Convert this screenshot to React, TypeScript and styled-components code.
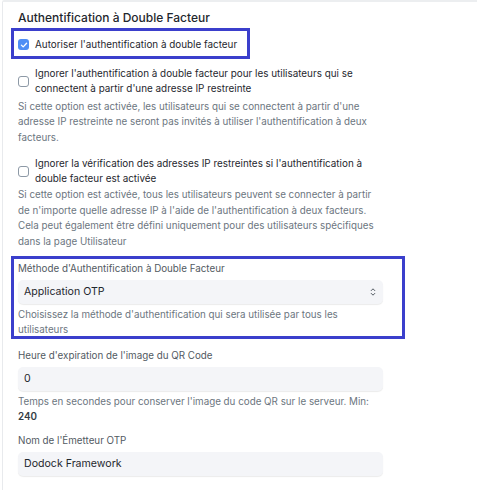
import React from "react";
import styled, { createGlobalStyle } from "styled-components";

const Global = createGlobalStyle`
  html, body { margin: 0; padding: 0; background: #ffffff; }
  body { font-family: Inter, "Noto Sans", sans-serif; color: #1f272e; -webkit-font-smoothing: antialiased; }
`;

const Page = styled.div`
  padding-left: 2px;
  height: 490px;
  overflow: hidden;
`;

const Panel = styled.div`
  border-left: 1px solid #e8eaed;
  border-top: 2px solid #eceef0;
  border-top-left-radius: 2px;
  padding: 8px 0 0 15px;
  min-height: 500px;
`;

const Title = styled.h3`
  margin: 0 0 11px 0;
  font-size: 12px;
  line-height: 16px;
  font-weight: 500;
  color: #1f272e;
`;

const Column = styled.div`
  width: 365px;
  display: flex;
  flex-direction: column;
`;

const Highlight = styled.div<{ $t: number; $l: number; $r: number; $b: number; $fit?: boolean }>`
  position: relative;
  ${(p) => (p.$fit ? "align-self: flex-start;" : "")}
  &::after {
    content: "";
    position: absolute;
    top: ${(p) => p.$t}px;
    left: ${(p) => p.$l}px;
    right: ${(p) => p.$r}px;
    bottom: ${(p) => p.$b}px;
    border: 3px solid #3b3fcc;
    pointer-events: none;
  }
`;

const CheckRow = styled.label`
  display: flex;
  align-items: center;
  gap: 6px;
  font-size: 9.9px;
  line-height: 15.5px;
  color: #1f272e;
`;

const Box = styled.span<{ $on?: boolean }>`
  flex: 0 0 auto;
  width: 11px;
  height: 11px;
  box-sizing: border-box;
  border-radius: 3px;
  border: ${(p) => (p.$on ? "none" : "1px solid #8d99a6")};
  background: ${(p) => (p.$on ? "#4f8ef5" : "#fff")};
  display: inline-flex;
  align-items: center;
  justify-content: center;
`;

const Help = styled.div<{ $mt: number }>`
  font-size: 9.8px;
  line-height: 15.5px;
  color: #6c7680;
  margin-top: ${(p) => p.$mt}px;
`;

const Label = styled.div`
  font-size: 9.8px;
  line-height: 15px;
  color: #525a62;
  margin-bottom: 3.5px;
`;

const Input = styled.div`
  height: 24px;
  box-sizing: border-box;
  border-radius: 5px;
  background: #f4f5f8;
  box-shadow: 0 1px 1px rgba(0, 0, 0, 0.08);
  padding: 0 6px;
  display: flex;
  align-items: center;
  justify-content: space-between;
  font-size: 10.6px;
  color: #1f272e;
`;

const Group = styled.div<{ $mt: number }>`
  margin-top: ${(p) => p.$mt}px;
`;

const Strong = styled.b`
  font-weight: 600;
  color: #333c44;
`;

const Check = () => (
  <svg width="8" height="8" viewBox="0 0 8 8">
    <path d="M1.4 4.1 L3.2 5.9 L6.6 2.2" fill="none" stroke="#fff" strokeWidth="1.3" strokeLinecap="round" strokeLinejoin="round" />
  </svg>
);

const Chevrons = () => (
  <svg width="8" height="12" viewBox="0 0 8 12">
    <path d="M2.2 4.6 L4 2.8 L5.8 4.6 M2.2 7.4 L4 9.2 L5.8 7.4" fill="none" stroke="#525a62" strokeWidth="1" strokeLinecap="round" strokeLinejoin="round" />
  </svg>
);

export default function App() {
  return (
    <>
      <Global />
      <Page>
        <Panel>
          <Title>Authentification à Double Facteur</Title>
          <Column>
            <Highlight $fit $t={-9} $l={-7} $r={-13} $b={-6}>
              <CheckRow>
                <Box $on>
                  <Check />
                </Box>
                Autoriser l'authentification à double facteur
              </CheckRow>
            </Highlight>
            <Group $mt={13}>
              <CheckRow>
                <Box />
                <span>
                  Ignorer l'authentification à double facteur pour les utilisateurs qui se connectent à partir d'une adresse IP restreinte
                </span>
              </CheckRow>
              <Help $mt={2}>
                Si cette option est activée, les utilisateurs qui se connectent à partir d'une adresse IP restreinte ne seront pas invités à utiliser l'authentification à deux facteurs.
              </Help>
            </Group>
            <Group $mt={10.5}>
              <CheckRow>
                <Box />
                <span>
                  Ignorer la vérification des adresses IP restreintes si l'authentification à double facteur est activée
                </span>
              </CheckRow>
              <Help $mt={0.5}>
                Si cette option est activée, tous les utilisateurs peuvent se connecter à partir de n'importe quelle adresse IP à l'aide de l'authentification à deux facteurs. Cela peut également être défini uniquement pour des utilisateurs spécifiques dans la page Utilisateur
              </Help>
            </Group>
            <Group $mt={12}>
              <Highlight $t={-5.5} $l={-7} $r={-22} $b={-1}>
                <Label>Méthode d'Authentification à Double Facteur</Label>
                <Input>
                  Application OTP
                  <Chevrons />
                </Input>
                <Help $mt={3}>Choisissez la méthode d'authentification qui sera utilisée par tous les utilisateurs</Help>
              </Highlight>
            </Group>
            <Group $mt={10.5}>
              <Label>Heure d'expiration de l'image du QR Code</Label>
              <Input>0</Input>
              <Help $mt={3}>
                Temps en secondes pour conserver l'image du code QR sur le serveur. Min: <Strong>240</Strong>
              </Help>
            </Group>
            <Group $mt={8.5}>
              <Label>Nom de l'Émetteur OTP</Label>
              <Input>Dodock Framework</Input>
            </Group>
          </Column>
        </Panel>
      </Page>
    </>
  );
}
